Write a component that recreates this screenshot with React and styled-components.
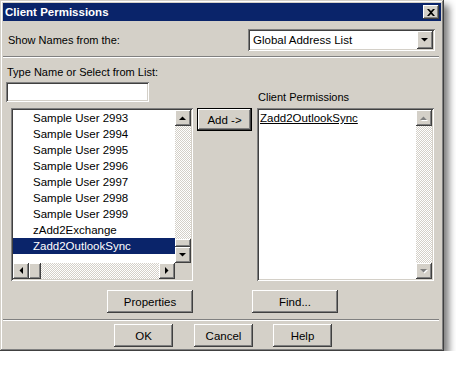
import React from 'react';
import styled, { createGlobalStyle, css } from 'styled-components';

const face = '#d4d0c8';
const navy = '#0a246a';

const GlobalStyle = createGlobalStyle`
  html, body { margin: 0; background: #fff; }
  body { font-family: "Liberation Sans", Arial, sans-serif; font-size: 11px; color: #000; }
`;

const raised = css`
  background: ${face};
  box-shadow: inset -1px -1px #404040, inset 1px 1px #fff, inset -2px -2px #808080, inset 2px 2px ${face};
`;

const sunken = css`
  box-shadow: inset 1px 1px #808080, inset -1px -1px #fff, inset 2px 2px #404040, inset -2px -2px ${face};
`;

const checker = css`
  background: repeating-conic-gradient(${face} 0 25%, #fff 0 50%) 0 0 / 2px 2px;
`;

const Dialog = styled.div`
  width: 444px;
  height: 351px;
  box-sizing: border-box;
  padding: 3px;
  background: ${face};
  display: flex;
  flex-direction: column;
  box-shadow: inset -1px -1px #404040, inset 1px 1px ${face}, inset -2px -2px #808080, inset 2px 2px #fff,
    5px 5px 7px rgba(0, 0, 0, 0.5);
`;

const TitleBar = styled.div`
  height: 18px;
  background: ${navy};
  display: flex;
  align-items: center;
  justify-content: space-between;
  padding: 0 2px;
  color: #fff;
  font-weight: bold;
  font-size: 11.5px;
`;

const CloseBox = styled.div`
  ${raised};
  width: 16px;
  height: 14px;
  display: flex;
  align-items: center;
  justify-content: center;
`;

const TopRow = styled.div`
  margin-top: 8px;
  height: 22px;
  display: flex;
  align-items: center;
  padding: 0 6px 0 5px;
`;

const Label = styled.span`
  line-height: 14px;
  white-space: nowrap;
`;

const Combo = styled.div`
  ${sunken};
  margin-left: auto;
  width: 187px;
  height: 22px;
  box-sizing: border-box;
  padding: 2px;
  background: #fff;
  display: flex;
  align-items: center;
`;

const ComboText = styled.span`
  flex: 1;
  padding-left: 3px;
  font-size: 11.5px;
`;

const ArrowButton = styled.div`
  ${raised};
  width: 16px;
  height: ${p => p.$h || 16}px;
  flex: none;
  display: flex;
  align-items: center;
  justify-content: center;
`;

const Separator = styled.div`
  height: 2px;
  margin: ${p => p.$mt}px 2px 0 0;
  box-shadow: inset 0 1px #808080, inset 0 -1px #fff;
`;

const Main = styled.div`
  display: grid;
  grid-template-columns: 187px 55px 178px;
  grid-template-rows: 50px 173px;
  column-gap: 4px;
  padding-left: 3px;
`;

const LeftTop = styled.div`
  display: flex;
  flex-direction: column;
  padding-top: 7px;
  padding-left: 1px;
`;

const NameInput = styled.div`
  ${sunken};
  margin: 3px 0 0 -1px;
  width: 143px;
  height: 20px;
  background: #fff;
`;

const RightLabel = styled(Label)`
  grid-column: 3;
  align-self: end;
  margin: 0 0 4px 2px;
`;

const ListBox = styled.div`
  ${sunken};
  box-sizing: border-box;
  padding: 2px;
  background: #fff;
  margin-left: ${p => p.$ml || 0}px;
  display: grid;
  grid-template-columns: 1fr 16px;
  grid-template-rows: ${p => (p.$hscroll ? '1fr 16px' : '1fr')};
  overflow: hidden;
`;

const Items = styled.div`
  overflow: hidden;
`;

const Item = styled.div`
  height: 16px;
  line-height: 16px;
  padding-left: ${p => p.$indent}px;
  white-space: nowrap;
  font-size: 11.5px;
  background: ${p => (p.$selected ? navy : 'transparent')};
  color: ${p => (p.$selected ? '#fff' : '#000')};
  text-decoration: ${p => (p.$focus ? 'underline' : 'none')};
`;

const VScroll = styled.div`
  display: flex;
  flex-direction: column;
`;

const HScroll = styled.div`
  display: flex;
`;

const Track = styled.div`
  flex: 1;
  ${checker};
`;

const Thumb = styled.div`
  ${raised};
  flex: none;
  width: ${p => p.$w || 16}px;
  height: ${p => p.$h || 16}px;
`;

const Corner = styled.div`
  background: ${face};
`;

const MidCol = styled.div`
  grid-column: 2;
`;

const Button = styled.div`
  ${raised};
  width: ${p => p.$w}px;
  height: ${p => p.$h || 23}px;
  margin-left: ${p => p.$ml || 0}px;
  box-sizing: border-box;
  display: flex;
  align-items: center;
  justify-content: center;
  font-size: 11.5px;
  ${p =>
    p.$default &&
    css`
      box-shadow: inset 0 0 0 1px #000, inset -2px -2px #404040, inset 2px 2px #fff, inset -3px -3px #808080;
    `}
`;

const ButtonRow = styled.div`
  display: flex;
  margin-top: ${p => p.$mt}px;
`;

const Arrow = ({ dir, disabled }) => {
  const pts = {
    up: '0,4 7,4 3.5,0.5',
    down: '0,0 7,0 3.5,3.5',
    left: '4,0 4,7 0.5,3.5',
    right: '0,0 0,7 3.5,3.5',
  }[dir];
  const vertical = dir === 'up' || dir === 'down';
  return (
    <svg width={vertical ? 8 : 5} height={vertical ? 5 : 8} viewBox={vertical ? '0 0 8 5' : '0 0 5 8'}>
      {disabled && <polygon points={pts} fill="#fff" transform="translate(1 1)" />}
      <polygon points={pts} fill={disabled ? '#808080' : '#000'} />
    </svg>
  );
};

const users = [2993, 2994, 2995, 2996, 2997, 2998, 2999];

export default function App() {
  return (
    <>
      <GlobalStyle />
      <Dialog>
        <TitleBar>
          <span>Client Permissions</span>
          <CloseBox>
            <svg width="8" height="7" viewBox="0 0 8 7">
              <path d="M0 0h2l2 2 2-2h2L5 3.5 8 7H6L4 5 2 7H0l3-3.5z" fill="#000" />
            </svg>
          </CloseBox>
        </TitleBar>

        <TopRow>
          <Label>Show Names from the:</Label>
          <Combo>
            <ComboText>Global Address List</ComboText>
            <ArrowButton $h={18}>
              <Arrow dir="down" />
            </ArrowButton>
          </Combo>
        </TopRow>

        <Separator $mt={5} />

        <Main>
          <LeftTop>
            <Label>Type Name or Select from List:</Label>
            <NameInput />
          </LeftTop>
          <RightLabel>Client Permissions</RightLabel>

          <ListBox $ml={5} $hscroll>
            <Items>
              {users.map(n => (
                <Item key={n} $indent={20}>Sample User {n}</Item>
              ))}
              <Item $indent={20}>zAdd2Exchange</Item>
              <Item $indent={20} $selected>Zadd2OutlookSync</Item>
            </Items>
            <VScroll>
              <ArrowButton>
                <Arrow dir="up" />
              </ArrowButton>
              <Track />
              <Thumb $h={8} />
              <ArrowButton>
                <Arrow dir="down" />
              </ArrowButton>
            </VScroll>
            <HScroll>
              <ArrowButton>
                <Arrow dir="left" />
              </ArrowButton>
              <Thumb $w={12} />
              <Track />
              <ArrowButton>
                <Arrow dir="right" />
              </ArrowButton>
            </HScroll>
            <Corner />
          </ListBox>

          <MidCol>
            <Button $w={55} $default>Add -&gt;</Button>
          </MidCol>

          <ListBox $ml={1}>
            <Items>
              <Item $indent={1} $focus>Zadd2OutlookSync</Item>
            </Items>
            <VScroll>
              <ArrowButton>
                <Arrow dir="up" disabled />
              </ArrowButton>
              <Track />
              <ArrowButton>
                <Arrow dir="down" disabled />
              </ArrowButton>
            </VScroll>
          </ListBox>
        </Main>

        <ButtonRow $mt={9}>
          <Button $w={86} $ml={104}>Properties</Button>
          <Button $w={86} $ml={59}>Find...</Button>
        </ButtonRow>

        <Separator $mt={6} />

        <ButtonRow $mt={3}>
          <Button $w={59} $ml={111}>OK</Button>
          <Button $w={59} $ml={21}>Cancel</Button>
          <Button $w={59} $ml={20}>Help</Button>
        </ButtonRow>
      </Dialog>
    </>
  );
}
